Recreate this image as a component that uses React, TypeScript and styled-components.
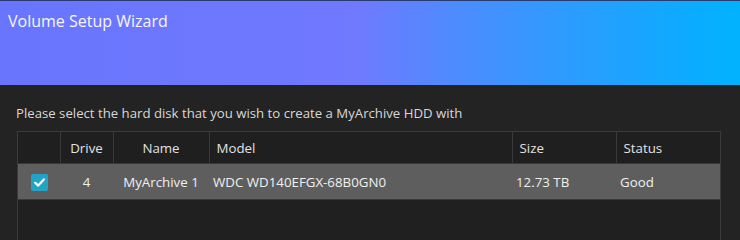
import React from 'react';
import styled, { createGlobalStyle } from 'styled-components';

type Disk = {
  drive: number;
  name: string;
  model: string;
  size: string;
  status: string;
  selected: boolean;
};

const disks: Disk[] = [
  {
    drive: 4,
    name: 'MyArchive 1',
    model: 'WDC WD140EFGX-68B0GN0',
    size: '12.73 TB',
    status: 'Good',
    selected: true,
  },
];

const GlobalStyle = createGlobalStyle`
  html, body {
    margin: 0;
    padding: 0;
    background: #232323;
  }
  body {
    font-family: "Open Sans", "Noto Sans", sans-serif;
  }
`;

const App: React.FC = () => {
  return (
    <>
      <GlobalStyle />
      <Wizard>
        <Header>
          <Title>Volume Setup Wizard</Title>
        </Header>
        <Body>
          <Instruction>
            Please select the hard disk that you wish to create a MyArchive HDD with
          </Instruction>
          <TableBox>
            <DiskTable>
              <colgroup>
                <col style={{ width: 42 }} />
                <col style={{ width: 53 }} />
                <col style={{ width: 96 }} />
                <col style={{ width: 303 }} />
                <col style={{ width: 104 }} />
                <col />
              </colgroup>
              <thead>
                <tr>
                  <HeadCell />
                  <HeadCell $center>Drive</HeadCell>
                  <HeadCell $center>Name</HeadCell>
                  <HeadCell>Model</HeadCell>
                  <HeadCell>Size</HeadCell>
                  <HeadCell>Status</HeadCell>
                </tr>
              </thead>
              <tbody>
                {disks.map((d) => (
                  <DiskRow key={d.drive} $selected={d.selected}>
                    <Cell $center>
                      <Check $checked={d.selected}>
                        {d.selected && (
                          <svg width="13" height="13" viewBox="0 0 13 13">
                            <path
                              d="M2.2 6.8 L5.2 9.6 L10.8 3.4"
                              fill="none"
                              stroke="#fff"
                              strokeWidth="2.2"
                              strokeLinecap="round"
                              strokeLinejoin="round"
                            />
                          </svg>
                        )}
                      </Check>
                    </Cell>
                    <Cell $center>{d.drive}</Cell>
                    <Cell $center>{d.name}</Cell>
                    <Cell>{d.model}</Cell>
                    <Cell>{d.size}</Cell>
                    <Cell>{d.status}</Cell>
                  </DiskRow>
                ))}
              </tbody>
            </DiskTable>
          </TableBox>
        </Body>
      </Wizard>
    </>
  );
};

export default App;

const Wizard = styled.div`
  width: 740px;
  height: 240px;
  overflow: hidden;
  background: #232323;
  display: flex;
  flex-direction: column;
`;

const Header = styled.div`
  height: 85px;
  border-top: 1px solid #2a3b70;
  background: linear-gradient(
    90deg,
    #6875fc 0%,
    #7079ff 48%,
    #4c8cff 62%,
    #2a9dff 78%,
    #00b2ff 100%
  );
  padding: 9px 8px 0;
  box-sizing: border-box;
  flex-shrink: 0;
`;

const Title = styled.div`
  color: #f6f6ff;
  font-size: 16px;
  line-height: 22px;
`;

const Body = styled.div`
  flex: 1;
  padding: 0 19px 0 16px;
  display: flex;
  flex-direction: column;
`;

const Instruction = styled.div`
  color: #d8d8d8;
  font-size: 13.2px;
  line-height: 18px;
  margin-top: 19px;
  margin-bottom: 9px;
`;

const TableBox = styled.div`
  flex: 1;
  margin-left: 1px;
  border: 1px solid #3a3a3a;
  border-bottom: none;
  background: #202020;
`;

const DiskTable = styled.table`
  width: 100%;
  border-collapse: collapse;
  table-layout: fixed;
  font-size: 13.3px;
`;

const HeadCell = styled.th<{ $center?: boolean }>`
  height: 31px;
  padding: 0 7px;
  font-weight: 400;
  color: #e2e2e2;
  text-align: ${(p) => (p.$center ? 'center' : 'left')};
  border-left: 1px solid #3a3a3a;
  border-bottom: 1px solid #3a3a3a;
  background: #1f1f1f;
  &:first-child {
    border-left: none;
  }
`;

const DiskRow = styled.tr<{ $selected?: boolean }>`
  background: ${(p) => (p.$selected ? '#5e5e5e' : 'transparent')};
`;

const Cell = styled.td<{ $center?: boolean }>`
  height: 35px;
  padding: 0 4px;
  color: #f0f0f0;
  text-align: ${(p) => (p.$center ? 'center' : 'left')};
  border-bottom: 1px solid #3a3a3a;
`;

const Check = styled.span<{ $checked?: boolean }>`
  display: inline-flex;
  align-items: center;
  justify-content: center;
  width: 17px;
  height: 17px;
  border-radius: 2px;
  vertical-align: middle;
  background: ${(p) => (p.$checked ? '#22a4c6' : '#2a2a2a')};
`;
